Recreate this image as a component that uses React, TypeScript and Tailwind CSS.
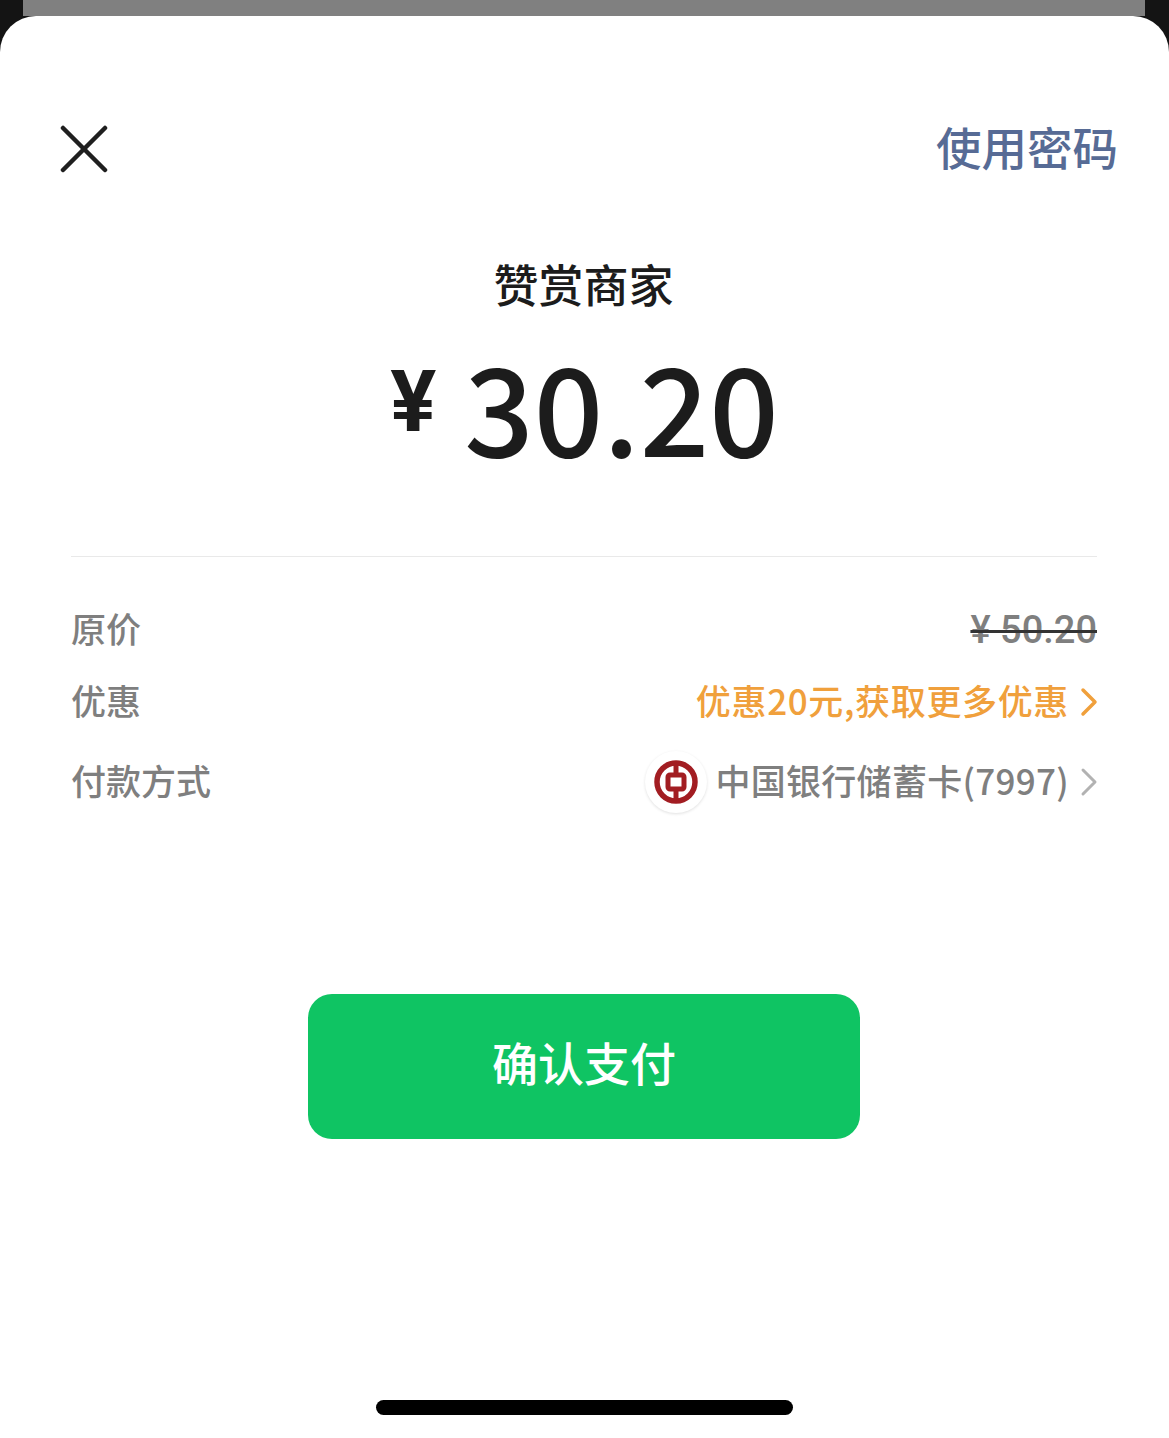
import { ChevronRight } from "lucide-react"

const cjk = "font-['Roboto','Noto_Sans_CJK_SC',sans-serif]"
const cjkFirst = "font-['Noto_Sans_CJK_SC',sans-serif]"

function BocLogo() {
  return (
    <div className="w-[62px] h-[62px] mt-[4px] rounded-full bg-white shadow-[0_1px_3px_rgba(0,0,0,0.12)] flex items-center justify-center">
      <svg width="44" height="44" viewBox="0 0 44 44" fill="none">
        <circle cx="22" cy="22" r="19" stroke="#a21d22" strokeWidth="5.5" />
        <rect x="14" y="15" width="16" height="14" rx="2" stroke="#a21d22" strokeWidth="5" />
        <rect x="19.5" y="3" width="5" height="11" fill="#a21d22" />
        <rect x="19.5" y="30" width="5" height="11" fill="#a21d22" />
      </svg>
    </div>
  )
}

function Row({ label, children, className }: { label: string; children: React.ReactNode; className: string }) {
  return (
    <div className={`flex items-center justify-between ${className}`}>
      <span className={`text-[35px] leading-[48px] font-medium text-[#7f7f7f] ${cjkFirst}`}>{label}</span>
      {children}
    </div>
  )
}

export default function App() {
  return (
    <div className={`w-full h-[1438px] overflow-hidden bg-[#141414] flex flex-col ${cjk}`}>
      <div className="h-4 ml-[23px] mr-6 bg-[#808080] shrink-0" />
      <div className="flex-1 bg-white rounded-t-[36px] flex flex-col items-center">
        <div className="w-full flex items-center justify-between pl-[60px] pr-[51px] pt-[101px]">
          <svg className="mt-[2px]" width="48" height="48" viewBox="0 0 48 48" fill="none" stroke="#1f1f1f" strokeWidth="4.5" strokeLinecap="round">
            <line x1="3" y1="3" x2="45" y2="45" />
            <line x1="45" y1="3" x2="3" y2="45" />
          </svg>
          <span className={`text-[45.5px] leading-[58px] mb-[3px] font-medium text-[#576b95] ${cjkFirst}`}>使用密码</span>
        </div>

        <div className={`mt-[77px] mr-[2px] text-[45px] leading-[58px] font-medium text-[#1c1c1c] ${cjkFirst}`}>赞赏商家</div>

        <div className="mt-[17px] flex items-start text-[#1c1c1c] h-[160px]">
          <span className="text-[86px] leading-[100px] mt-[22px] mr-[28px] font-bold">¥</span>
          <span className={`text-[122px] leading-[160px] -mt-[6px] font-medium ${cjkFirst}`}>30.20</span>
        </div>

        <div className="mt-[66px] w-[1026px] mr-px border-t border-[#e9e9e9]" />

        <div className={`w-[1026px] mr-px mt-[47px] flex flex-col ${cjkFirst}`}>
          <Row label="原价" className="h-[48px]">
            <span className="text-[38px] leading-[48px] mt-[4px] font-medium text-[#7f7f7f] line-through decoration-[#333333] decoration-[3px] font-['Roboto']">¥ 50.20</span>
          </Row>
          <Row label="优惠" className="h-[48px] mt-[24px]">
            <div className="flex items-center text-[#f0a03c]">
              <span className="text-[35px] leading-[48px] font-medium tracking-[0.65px]">优惠20元,获取更多优惠</span>
              <ChevronRight size={48} strokeWidth={3.5} absoluteStrokeWidth className="-mt-[6px] -mb-[10px] -ml-[4px] -mr-[16px]" />
            </div>
          </Row>
          <Row label="付款方式" className="h-[62px] mt-[25px]">
            <div className="flex items-center">
              <BocLogo />
              <span className="ml-[8px] text-[35px] leading-[48px] font-medium text-[#7f7f7f] tracking-[0.3px]">中国银行储蓄卡(7997)</span>
              <ChevronRight size={48} strokeWidth={3} absoluteStrokeWidth className="-mt-[6px] -mb-[10px] -ml-[4px] -mr-[16px] text-[#b2b2b2]" />
            </div>
          </Row>
        </div>

        <button className={`mt-[183px] mr-px w-[552px] h-[145px] pb-[10px] rounded-[24px] bg-[#0fc463] text-white text-[46px] font-medium ${cjkFirst}`}>
          确认支付
        </button>

        <div className="mt-[261px] w-[417px] h-[15px] rounded-full bg-black" />
      </div>
    </div>
  )
}
